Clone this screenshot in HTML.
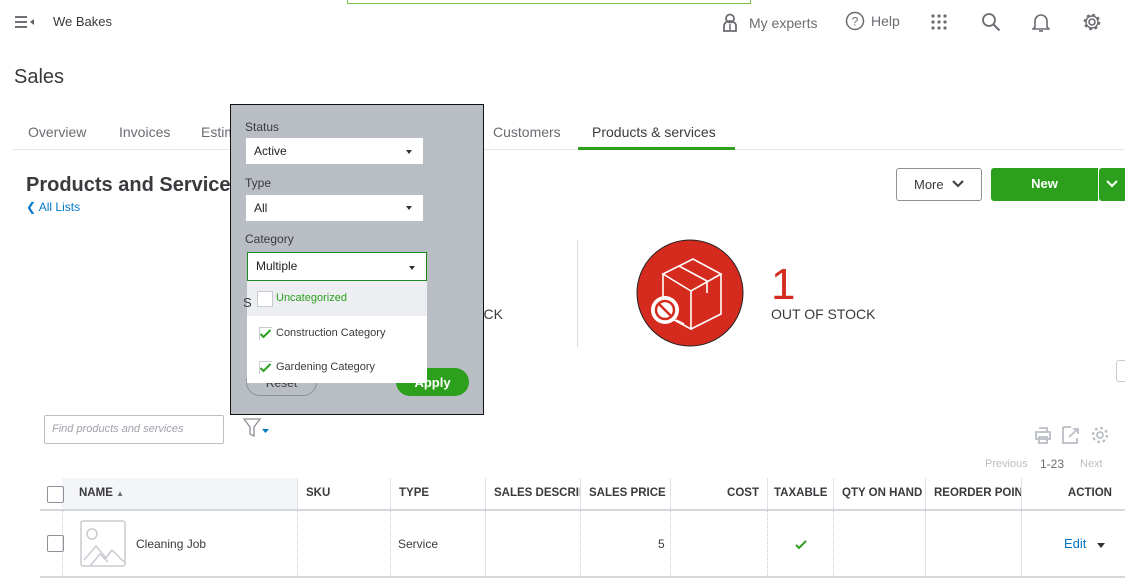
<!DOCTYPE html>
<html><head><meta charset="utf-8"><style>
*{box-sizing:border-box;margin:0;padding:0}
body{width:1125px;height:579px;overflow:hidden;background:#fff;font-family:"Liberation Sans",sans-serif;color:#393a3d;position:relative}
.a{position:absolute;white-space:nowrap}
.th{position:absolute;top:478px;height:31px;font-size:11.5px;font-weight:bold;color:#393a3d;line-height:31px;padding:0 8px;border-left:1px solid #e0e2e6;overflow:hidden;white-space:nowrap}
.vl{position:absolute;top:510px;height:66px;border-left:1px dotted #c8cbd0}
.sel{position:absolute;background:#fff;font-size:12px;color:#222;padding-left:8px;line-height:26px}
.tri{position:absolute;width:0;height:0;border-left:3.5px solid transparent;border-right:3.5px solid transparent;border-top:4px solid #333}
</style></head><body>
<div class="a" style="left:347px;top:-2px;width:404px;height:6px;border:1px solid #7ac142;border-top:none"></div>
<svg class="a" style="left:15px;top:15px" width="20" height="14" viewBox="0 0 20 14"><path d="M0 2h12M0 7h12M0 12h12" stroke="#5c5f64" stroke-width="1.8"/><path d="M15 7l4-3v6z" fill="#5c5f64"/></svg>
<div class="a" style="left:53px;top:14px;font-size:13px;color:#393a3d">We Bakes</div>
<svg class="a" style="left:722px;top:13px" width="16" height="19" viewBox="0 0 16 19"><circle cx="8" cy="5.5" r="4" fill="none" stroke="#6b6c72" stroke-width="1.8"/><path d="M2 18v-5a6 5 0 0 1 12 0v5z" fill="none" stroke="#6b6c72" stroke-width="1.8"/><path d="M8 11v6" stroke="#6b6c72" stroke-width="1.5"/></svg>
<div class="a" style="left:749px;top:15px;font-size:14px;color:#6b6c72">My experts</div>
<svg class="a" style="left:845px;top:11px" width="20" height="20" viewBox="0 0 20 20"><circle cx="10" cy="10" r="8.5" fill="none" stroke="#6b6c72" stroke-width="1.5"/><text x="10" y="14.5" font-size="12" text-anchor="middle" fill="#6b6c72" font-family="Liberation Sans">?</text></svg>
<div class="a" style="left:871px;top:13px;font-size:14px;color:#6b6c72">Help</div>
<svg class="a" style="left:931px;top:14px" width="16" height="16" viewBox="0 0 16 16" fill="#6b6c72"><circle cx="2" cy="2" r="1.6"/><circle cx="8" cy="2" r="1.6"/><circle cx="14" cy="2" r="1.6"/><circle cx="2" cy="8" r="1.6"/><circle cx="8" cy="8" r="1.6"/><circle cx="14" cy="8" r="1.6"/><circle cx="2" cy="14" r="1.6"/><circle cx="8" cy="14" r="1.6"/><circle cx="14" cy="14" r="1.6"/></svg>
<svg class="a" style="left:981px;top:12px" width="20" height="20" viewBox="0 0 20 20"><circle cx="8" cy="8" r="6" fill="none" stroke="#6b6c72" stroke-width="1.8"/><path d="M12.5 12.5l6 6" stroke="#6b6c72" stroke-width="2"/></svg>
<svg class="a" style="left:1032px;top:12px" width="18" height="21" viewBox="0 0 18 21"><path d="M3 15V9a6 6 0 0 1 12 0v6l2 2H1z" fill="none" stroke="#6b6c72" stroke-width="1.6"/><path d="M7 19h4" stroke="#6b6c72" stroke-width="1.6"/></svg>
<svg class="a" style="left:1082px;top:12px" width="20" height="20" viewBox="0 0 20 20"><circle cx="10" cy="10" r="3" fill="none" stroke="#6b6c72" stroke-width="1.6"/><circle cx="10" cy="10" r="7" fill="none" stroke="#6b6c72" stroke-width="2.6" stroke-dasharray="2.7 2.8"/><circle cx="10" cy="10" r="6" fill="none" stroke="#6b6c72" stroke-width="1.4"/></svg>
<div class="a" style="left:14px;top:66px;font-size:20px;color:#393a3d">Sales</div>
<div class="a" style="left:13px;top:149px;width:1112px;border-top:1px solid #e3e5e8"></div>
<div class="a" style="left:28px;top:124px;font-size:14px;color:#6b6c72">Overview</div>
<div class="a" style="left:119px;top:124px;font-size:14px;color:#6b6c72">Invoices</div>
<div class="a" style="left:201px;top:124px;font-size:14px;color:#6b6c72">Estimates</div>
<div class="a" style="left:493px;top:124px;font-size:14px;color:#6b6c72">Customers</div>
<div class="a" style="left:592px;top:124px;font-size:14px;color:#393a3d">Products &amp; services</div>
<div class="a" style="left:578px;top:147px;width:157px;height:3px;background:#2ca01c"></div>
<div class="a" style="left:26px;top:174px;font-size:20px;font-weight:bold;color:#393a3d">Products and Services</div>
<div class="a" style="left:26px;top:200px;font-size:12px;color:#0077c5">&#10094; All Lists</div>
<div class="a" style="left:896px;top:168px;width:86px;height:33px;border:1px solid #8d9096;border-radius:3px;font-size:13px;color:#393a3d;line-height:31px;padding-left:17px">More <svg width="14" height="10" viewBox="0 0 14 10" style="margin-left:4px"><path d="M2 2l5 5 5-5" fill="none" stroke="#393a3d" stroke-width="2"/></svg></div>
<div class="a" style="left:991px;top:168px;width:107px;height:33px;background:#2ca01c;border-radius:3px 0 0 3px;color:#fff;font-size:13px;font-weight:bold;text-align:center;line-height:32px">New</div>
<div class="a" style="left:1099px;top:168px;width:26px;height:33px;background:#2ca01c;border-radius:3px 0 0 3px;text-align:center"><svg width="14" height="10" viewBox="0 0 14 10" style="margin-top:11px"><path d="M2 2l5 5 5-5" fill="none" stroke="#fff" stroke-width="2"/></svg></div>
<div class="a" style="left:577px;top:240px;height:107px;border-left:1px solid #dcdde0"></div>
<div class="a" style="left:455px;top:306px;font-size:14px;color:#393a3d">STOCK</div>
<svg class="a" style="left:635px;top:239px" width="110" height="108" viewBox="0 0 110 108"><circle cx="55" cy="54" r="53" fill="#d52b1e" stroke="#222" stroke-width="1"/><g fill="none" stroke="#fff" stroke-width="1.6"><path d="M28 35l30-15 28 15-30 17z"/><path d="M28 35v40l28 15V52"/><path d="M86 35v40l-30 15"/><path d="M44 27l28 15v12"/></g><circle cx="30" cy="71" r="14" fill="#fff"/><circle cx="30" cy="71" r="9" fill="none" stroke="#d52b1e" stroke-width="2.5"/><path d="M24 65l12 12" stroke="#d52b1e" stroke-width="2.5"/><path d="M41 81l8 4" stroke="#fff" stroke-width="1.6"/></svg>
<div class="a" style="left:771px;top:260px;font-size:44px;color:#d52b1e;font-weight:300">1</div>
<div class="a" style="left:771px;top:306px;font-size:14px;color:#393a3d">OUT OF STOCK</div>
<div class="a" style="left:1116px;top:360px;width:12px;height:22px;border:1px solid #c8cbd0;border-radius:3px;border-right:none"></div>
<div class="a" style="left:44px;top:415px;width:180px;height:29px;border:1px solid #babec5;border-radius:2px;font-size:11px;font-style:italic;color:#9ea1a8;line-height:27px;padding-left:7px">Find products and services</div>
<svg class="a" style="left:243px;top:418px" width="28" height="20" viewBox="0 0 28 20"><path d="M1 1h16l-6 8v9l-4-2V9z" fill="none" stroke="#8d9096" stroke-width="1.3"/><path d="M19 11h7l-3.5 4z" fill="#0077c5"/></svg>
<svg class="a" style="left:1033px;top:425px" width="80" height="20" viewBox="0 0 80 20" fill="none" stroke="#babec5" stroke-width="1.8"><path d="M3 7h14v7H3zM6 3h8v4M6 12h8v6H6z"/><path d="M30 2h8M30 2v16h14v-5M36 12l9-8M40 4h5v5"/><circle cx="67" cy="10" r="3"/><circle cx="67" cy="10" r="7" stroke-dasharray="2.7 2.8" stroke-width="2.4"/></svg>
<div class="a" style="left:985px;top:458px;font-size:11px;color:#babec5">Previous</div>
<div class="a" style="left:1040px;top:457px;font-size:12px;color:#6b6c72">1-23</div>
<div class="a" style="left:1080px;top:458px;font-size:11px;color:#babec5">Next</div>
<div class="a" style="left:62px;top:478px;width:235px;height:31px;background:#f4f5f8"></div>
<div class="a" style="left:40px;top:509px;width:1085px;border-top:2px solid #d4d7dc"></div>
<div class="a" style="left:40px;top:576px;width:1085px;border-top:2px solid #d4d7dc"></div>
<div class="a" style="left:47px;top:486px;width:17px;height:17px;border:1px solid #8d9096;border-radius:2px"></div>
<div class="th" style="left:62px;width:235px;border-left:none;padding-left:17px">NAME <span style="font-size:8px;color:#6b6c72">&#9650;</span></div>
<div class="th" style="left:297px;width:93px">SKU</div>
<div class="th" style="left:390px;width:95px">TYPE</div>
<div class="th" style="left:485px;width:95px;padding-right:0">SALES DESCRIPTION</div>
<div class="th" style="left:580px;width:90px;text-align:right">SALES PRICE</div>
<div class="th" style="left:670px;width:97px;text-align:right">COST</div>
<div class="th" style="left:767px;width:66px;padding:0 6px">TAXABLE</div>
<div class="th" style="left:833px;width:92px">QTY ON HAND</div>
<div class="th" style="left:925px;width:96px;padding-right:0">REORDER POINT</div>
<div class="th" style="left:1021px;width:99px;text-align:right">ACTION</div>
<div class="vl" style="left:62px"></div><div class="vl" style="left:297px"></div><div class="vl" style="left:390px"></div><div class="vl" style="left:485px"></div><div class="vl" style="left:580px"></div><div class="vl" style="left:670px"></div><div class="vl" style="left:767px"></div><div class="vl" style="left:833px"></div><div class="vl" style="left:925px"></div><div class="vl" style="left:1021px"></div>
<div class="a" style="left:47px;top:535px;width:17px;height:17px;border:1px solid #8d9096;border-radius:2px"></div>
<svg class="a" style="left:80px;top:520px" width="46" height="47" viewBox="0 0 46 47"><rect x="1" y="1" width="44" height="45" rx="2" fill="none" stroke="#c8cbd0" stroke-width="1.5"/><circle cx="12" cy="14" r="5" fill="none" stroke="#c8cbd0" stroke-width="1.5"/><path d="M4 40l12-14 10 12 6-8 12 12M10 46l10-12 8 8" fill="none" stroke="#c8cbd0" stroke-width="1.5"/></svg>
<div class="a" style="left:136px;top:537px;font-size:12px;color:#393a3d">Cleaning Job</div>
<div class="a" style="left:398px;top:537px;font-size:12px;color:#393a3d">Service</div>
<div class="a" style="left:658px;top:537px;font-size:12px;color:#393a3d">5</div>
<svg class="a" style="left:795px;top:540px" width="12" height="10" viewBox="0 0 12 10"><path d="M1 5l3 3 7-7" fill="none" stroke="#2ca01c" stroke-width="2"/></svg>
<div class="a" style="left:1064px;top:536px;font-size:13px;color:#0077c5">Edit</div>
<div class="tri" style="left:1097px;top:543px;border-left-width:4.5px;border-right-width:4.5px;border-top-width:5px"></div>
<div class="a" style="left:230px;top:104px;width:254px;height:311px;background:#b9bec5;border:1px solid #111"></div>
<div class="a" style="left:245px;top:120px;font-size:12px;color:#393a3d">Status</div>
<div class="sel" style="left:246px;top:138px;width:177px;height:26px">Active</div><div class="tri" style="left:406px;top:150px"></div>
<div class="a" style="left:245px;top:176px;font-size:12px;color:#393a3d">Type</div>
<div class="sel" style="left:246px;top:195px;width:177px;height:26px">All</div><div class="tri" style="left:406px;top:206px"></div>
<div class="a" style="left:245px;top:232px;font-size:12px;color:#393a3d">Category</div>
<div class="sel" style="left:247px;top:252px;width:180px;height:29px;border:1px solid #1e8a1e;line-height:27px">Multiple</div><div class="tri" style="left:409px;top:266px"></div>
<div class="a" style="left:246px;top:368px;width:71px;height:28px;border:1px solid #8d9096;border-radius:14px;font-size:12px;color:#393a3d;text-align:center;line-height:28px">Reset</div>
<div class="a" style="left:396px;top:368px;width:73px;height:28px;background:#2ca01c;border-radius:14px;font-size:13px;font-weight:bold;color:#fff;text-align:center;line-height:30px">Apply</div>
<div class="a" style="left:247px;top:281px;width:180px;height:102px;background:#fff"></div>
<div class="a" style="left:247px;top:281px;width:180px;height:35px;background:#eceef1"></div>
<div class="a" style="left:257px;top:291px;width:16px;height:16px;border:1px solid #c8cbd0;background:#fff"></div>
<div class="a" style="left:276px;top:292px;font-size:11px;color:#2ca01c">Uncategorized</div>
<div class="a" style="left:259px;top:327px;width:13px;height:13px;border-left:1px solid #c8cbd0;border-top:1px solid #c8cbd0"></div>
<svg class="a" style="left:259px;top:328px" width="13" height="11" viewBox="0 0 13 11"><path d="M1.5 6l3 3 7-7" fill="none" stroke="#2ca01c" stroke-width="2"/></svg>
<div class="a" style="left:276px;top:327px;font-size:11px;color:#393a3d">Construction Category</div>
<div class="a" style="left:259px;top:361px;width:13px;height:13px;border-left:1px solid #c8cbd0;border-top:1px solid #c8cbd0"></div>
<svg class="a" style="left:259px;top:362px" width="13" height="11" viewBox="0 0 13 11"><path d="M1.5 6l3 3 7-7" fill="none" stroke="#2ca01c" stroke-width="2"/></svg>
<div class="a" style="left:276px;top:361px;font-size:11px;color:#393a3d">Gardening Category</div>
<div class="a" style="left:243px;top:295px;font-size:13px;color:#393a3d">S</div>
</body></html>
